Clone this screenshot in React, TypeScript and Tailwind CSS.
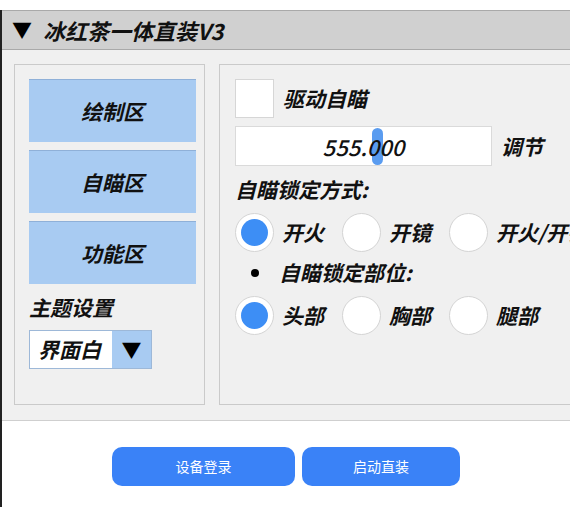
const cjk = "font-['Noto_Sans_CJK_SC','Noto_Sans',sans-serif]";

function Radio({ label, checked }: { label: string; checked?: boolean }) {
  return (
    <div className="flex w-[107px] shrink-0 items-center gap-[8px]">
      <div className="flex h-[39px] w-[39px] shrink-0 items-center justify-center rounded-full border border-[#d4d4d4] bg-white">
        {checked && <div className="h-[27px] w-[27px] rounded-full bg-[#3d8ef5]" />}
      </div>
      <span className="whitespace-nowrap text-[21px] font-bold italic leading-none text-[#111]">{label}</span>
    </div>
  );
}

function ZoneButton({ label }: { label: string }) {
  return (
    <div className="flex h-[63px] w-[167px] items-center justify-center border-t border-[#8fb0d8] bg-[#a8cbf2]">
      <span className="text-[21px] font-bold italic leading-none text-[#111]">{label}</span>
    </div>
  );
}

export default function App() {
  return (
    <div className={`h-[507px] w-[570px] overflow-hidden bg-white ${cjk}`}>
      <div className="mt-[10px] flex h-[497px] flex-col border-l-2 border-[#222]">
        {/* Title bar */}
        <div className="flex h-[40px] items-center gap-[11px] border-y border-[#a9a9a9] bg-[#d0d0d0] pl-[10px]">
          <span className="text-[20px] leading-none text-black">▼</span>
          <span className="text-[22px] font-bold italic leading-none text-[#111]">冰红茶一体直装V3</span>
        </div>

        {/* Body */}
        <div className="flex h-[371px] gap-[14px] border-b border-[#cfcfcf] bg-[#f0f0f0] pl-[12px] pt-[14px]">
          {/* Left panel */}
          <div className="flex h-[341px] w-[191px] shrink-0 flex-col border border-[#cacaca] pl-[14px] pt-[14px]">
            <div className="flex flex-col gap-[8px]">
              <ZoneButton label="绘制区" />
              <ZoneButton label="自瞄区" />
              <ZoneButton label="功能区" />
            </div>
            <div className="mt-[13px] text-[21px] font-bold italic leading-none text-[#111]">主题设置</div>
            <div className="mt-[12px] flex h-[39px] w-[123px] border border-[#9db8d8]">
              <div className="flex flex-1 items-center bg-white pl-[8px] text-[21px] font-bold italic leading-none text-[#111]">界面白</div>
              <div className="flex w-[39px] items-center justify-center bg-[#a8cbf2] text-[20px] leading-none text-black">▼</div>
            </div>
          </div>

          {/* Right panel */}
          <div className="flex h-[341px] flex-1 flex-col border-y border-l border-[#cacaca] pl-[15px] pt-[14px]">
            <div className="flex items-center gap-[9px]">
              <div className="h-[39px] w-[39px] border border-[#d6d6d6] bg-white" />
              <span className="text-[21px] font-bold italic leading-none text-[#111]">驱动自瞄</span>
            </div>
            <div className="mt-[8px] flex items-center gap-[9px]">
              <div className="relative flex h-[40px] w-[257px] items-center justify-center border border-[#dadada] bg-white">
                <div className="absolute left-[136px] top-[1px] h-[37px] w-[11px] rounded-full bg-[#5a9cf0]" />
                <span className="relative text-[22px] font-medium italic leading-none text-[#111]">555.000</span>
              </div>
              <span className="text-[21px] font-bold italic leading-none text-[#111]">调节</span>
            </div>
            <div className="mt-[13px] text-[21px] font-bold italic leading-none text-[#111]">自瞄锁定方式:</div>
            <div className="mt-[13px] flex">
              <Radio label="开火" checked />
              <Radio label="开镜" />
              <Radio label="开火/开镜" />
            </div>
            <div className="mt-[10px] flex items-center gap-[20px] pl-[16px]">
              <div className="h-[8px] w-[8px] rounded-full bg-black" />
              <span className="text-[21px] font-bold italic leading-none text-[#111]">自瞄锁定部位:</span>
            </div>
            <div className="mt-[13px] flex">
              <Radio label="头部" checked />
              <Radio label="胸部" />
              <Radio label="腿部" />
            </div>
          </div>
        </div>

        {/* Bottom actions */}
        <div className="mt-[26px] flex gap-[7px] pl-[110px]">
          <button className="h-[39px] w-[183px] rounded-[10px] bg-[#3a82f7] text-[14px] text-white">设备登录</button>
          <button className="h-[39px] w-[158px] rounded-[10px] bg-[#3a82f7] text-[14px] text-white">启动直装</button>
        </div>
      </div>
    </div>
  );
}
